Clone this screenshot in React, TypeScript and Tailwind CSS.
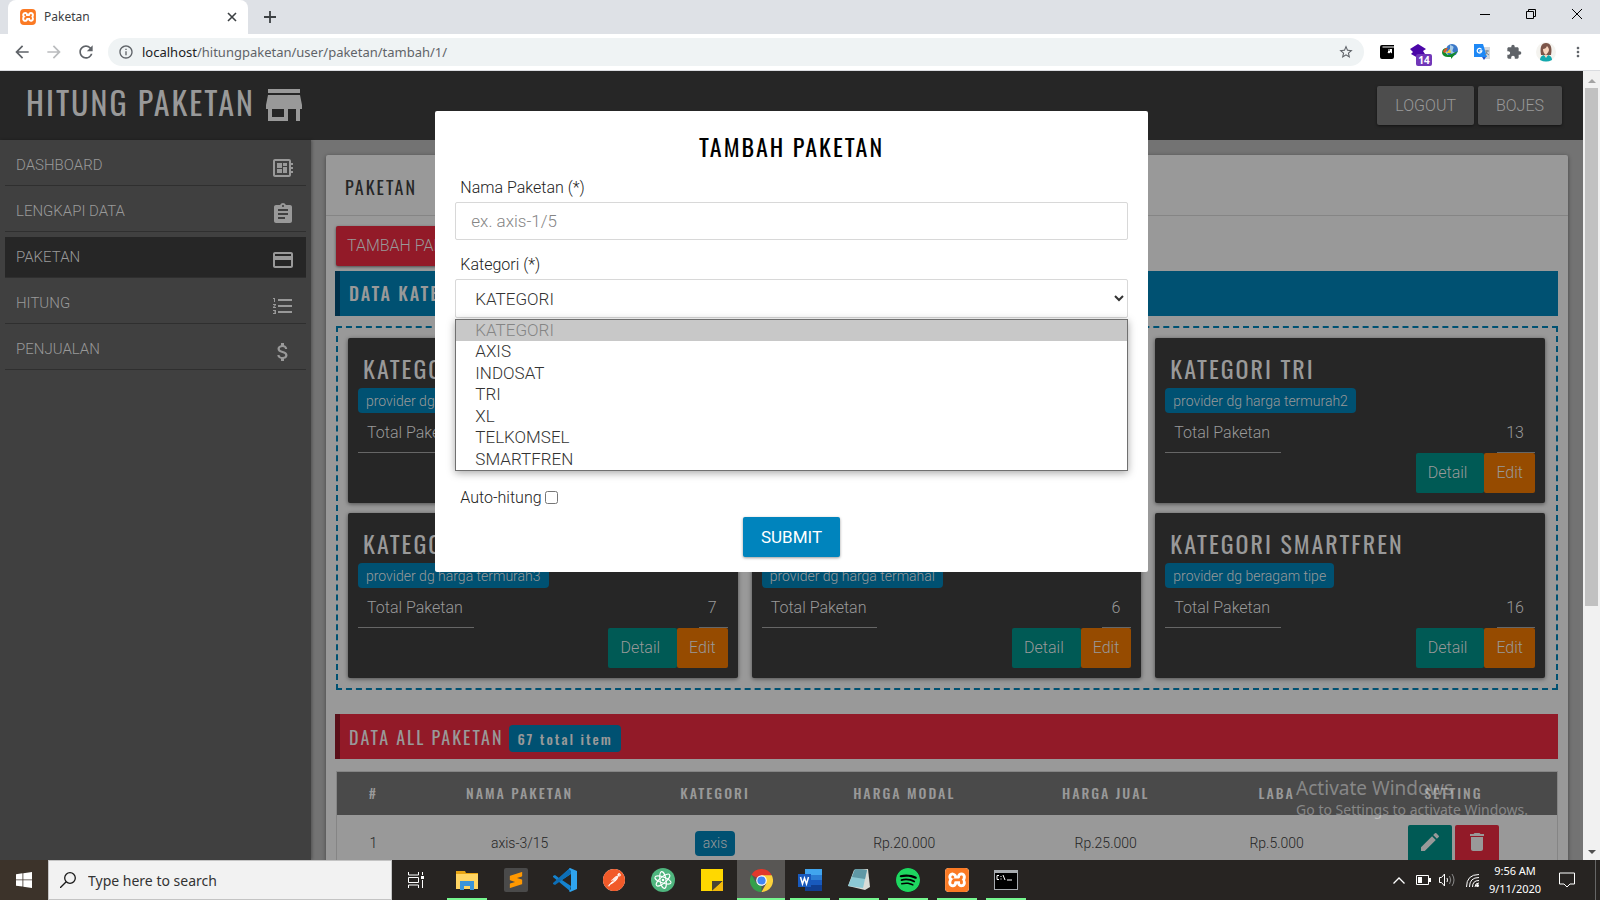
import { useState } from "react";
import type { ReactNode } from "react";
import clsx from "clsx";
import {
  MdArrowBack,
  MdArrowForward,
  MdAssignment,
  MdAttachMoney,
  MdDelete,
  MdDeveloperBoard,
  MdEdit,
  MdExtension,
  MdFormatListNumbered,
  MdInfoOutline,
  MdMoreVert,
  MdPayment,
  MdRefresh,
  MdStarBorder,
  MdStore,
} from "react-icons/md";
import { SiPostman, SiSpotify, SiSublimetext, SiXampp } from "react-icons/si";

const heading = "font-['Oswald',sans-serif] tracking-[2px]";
const system = "font-['Noto_Sans','Open_Sans',sans-serif]";

function XamppIcon({ className }: { className?: string }) {
  return (
    <span className={clsx("flex overflow-hidden rounded-sm bg-white text-[#fb7a24]", className)}>
      <SiXampp className="h-full w-full" />
    </span>
  );
}

function BrowserBar() {
  return (
    <div className={clsx("shrink-0 text-[#3c4043]", system)}>
      <div className="flex h-[34px] items-stretch bg-[#dee1e6] pl-2">
        <div className="flex w-60 items-center rounded-t-lg bg-white pr-[9px] pl-3 text-xs">
          <XamppIcon className="size-4" />
          <span className="ml-2 flex-1">Paketan</span>
          <button type="button" aria-label="Close tab" className="flex size-3.5 items-center justify-center">
            <svg viewBox="0 0 10 10" className="size-2.5" stroke="currentColor" strokeWidth="1.600">
              <path d="M1 1l8 8M9 1l-8 8" />
            </svg>
          </button>
        </div>
        <button type="button" aria-label="New tab" className="ml-4 flex items-center">
          <svg viewBox="0 0 12 12" className="size-3" stroke="currentColor" strokeWidth="1.800">
            <path d="M6 0v12M0 6h12" />
          </svg>
        </button>
        <div className="ml-auto flex pb-1.5 text-black">
          <button type="button" aria-label="Minimize" className="flex w-[46px] items-center justify-center">
            <svg viewBox="0 0 10 10" className="size-2.5" stroke="currentColor">
              <path d="M0 5.500h10" />
            </svg>
          </button>
          <button type="button" aria-label="Restore" className="flex w-[46px] items-center justify-center">
            <svg viewBox="0 0 10 10" className="size-2.5" fill="none" stroke="currentColor">
              <path d="M.5 2.500h7v7h-7zM2.500 2.500v-2h7v7h-2" />
            </svg>
          </button>
          <button type="button" aria-label="Close" className="flex w-[46px] items-center justify-center">
            <svg viewBox="0 0 10 10" className="size-2.5" stroke="currentColor">
              <path d="M0 0l10 10M10 0L0 10" />
            </svg>
          </button>
        </div>
      </div>
      <div className="flex h-[37px] items-center border-b border-[#dadce0] bg-white pr-3.5 pl-3 text-[#5f6368]">
        <div className="flex gap-3">
          <button type="button" aria-label="Back"><MdArrowBack className="size-5" /></button>
          <button type="button" aria-label="Forward" className="text-[#babcbe]"><MdArrowForward className="size-5" /></button>
          <button type="button" aria-label="Reload"><MdRefresh className="size-5" /></button>
        </div>
        <div className="mr-4 ml-3 flex h-7 flex-1 items-center rounded-full bg-[#eff3f4] px-2.5">
          <MdInfoOutline className="size-4" />
          <label className="ml-2 flex flex-1 items-center pt-0.5 text-[13px]">
            <span className="text-[#202124]">localhost</span>
            <input aria-label="Address" type="text" defaultValue="/hitungpaketan/user/paketan/tambah/1/" className="min-w-0 flex-1 bg-transparent outline-none" />
          </label>
          <MdStarBorder className="size-4" />
        </div>
        <div className="flex items-center gap-4">
          <svg viewBox="0 0 14 16" className="h-4 w-3.5">
            <path d="M2 1h12v1.500H2.500v1H14V13a2 2 0 0 1-2 2H2a2 2 0 0 1-2-2V3a2 2 0 0 1 2-2z" />
            <path d="M6 5h6v4.500l-1.500-1.200L9 9.500 7.500 8.300 6 5z" fill="#fff" />
            <path d="M6 5h2v3H6zM8.500 5h1v2h-1z" />
          </svg>
          <span className="relative size-4">
            <svg viewBox="0 0 16 16" className="size-4" fill="#4b06a8">
              <path d="M8 0l8 5-3 2 2 3-7 4-7-4 2-2-3-3z" />
            </svg>
            <span className="absolute top-2.5 left-1.5 flex h-3 w-4 items-center justify-center rounded-xs bg-[#7137b8] text-[10px] font-bold text-white">14</span>
          </span>
          <svg viewBox="0 0 16 16" className="size-4">
            <circle cx="10" cy="6" r="6" fill="#3a78c8" />
            <path d="M8 1q5 1 3 4t3 4q-4 3-6-1z" fill="#a6cbe8" />
            <path d="M0 9q0-5 5-5L3 8l3 3q4-1 10-4l-7 8V13H6Q1 13 0 9z" fill="#148a2c" />
            <path d="M1 8q1-4 5-4L3 9z" fill="#e0552b" />
            <path d="M4 9l4-4 1 4z" fill="#f3c535" />
          </svg>
          <svg viewBox="0 0 16 16" className="size-4">
            <path d="M7 3h9v12H10z" fill="#d5d8dc" />
            <path d="M0 0h9l4 13H0z" fill="#1e88f5" />
            <path d="M7.500 5.500A2.300 2.300 0 1 0 7.800 7H5.500" fill="none" stroke="#fff" strokeWidth="1.300" />
            <path d="M11 7h4M13 6v1q0 3-2 4M12 8q1 2 3 3" stroke="#7b8790" fill="none" />
            <path d="M8 13h4l-2 3z" fill="#2557c7" />
          </svg>
          <MdExtension className="size-4" />
          <svg viewBox="0 0 20 20" className="-mx-0.5 size-5">
            <circle cx="10" cy="10" r="10" fill="#f4f3ef" />
            <path d="M5 13Q3 1 10 1t5 12z" fill="#7c5549" />
            <path d="M7 7q3 0 4-3 2 2 2 4t-3 5q-3-2-3-6z" fill="#f7d4bd" />
            <path d="M4 18q0-4 4-5l2 2 2-2q4 1 4 5-6 3-12 0z" fill="#12a9ae" />
            <path d="M8 13h4l-2 3z" fill="#f7d4bd" />
          </svg>
          <MdMoreVert className="size-4" />
        </div>
      </div>
    </div>
  );
}

const menu = [
  { label: "DASHBOARD", Icon: MdDeveloperBoard },
  { label: "LENGKAPI DATA", Icon: MdAssignment },
  { label: "PAKETAN", Icon: MdPayment, active: true },
  { label: "HITUNG", Icon: MdFormatListNumbered },
  { label: "PENJUALAN", Icon: MdAttachMoney },
];

function Sidebar() {
  return (
    <nav className="w-[311px] shrink-0 bg-[#404040] p-[5px] shadow-[1px_0_3px_rgba(0,0,0,0.3)]">
      <ul className="flex flex-col gap-[5px]">
        {menu.map(({ label, Icon, active }) => (
          <li key={label}>
            <a
              href="#"
              className={clsx("flex h-[41px] items-center justify-between border-b border-[#2f2f2f] px-[11px] text-[15px]", active && "bg-[#262626]")}
            >
              {label}
              <Icon className="mt-1.5 size-6" />
            </a>
          </li>
        ))}
      </ul>
    </nav>
  );
}

const categories = [
  { name: "AXIS", note: "provider dg harga termurah", total: 15 },
  { name: "INDOSAT", note: "provider dg harga menengah", total: 10 },
  { name: "TRI", note: "provider dg harga termurah2", total: 13 },
  { name: "XL", note: "provider dg harga termurah3", total: 7 },
  { name: "TELKOMSEL", note: "provider dg harga termahal", total: 6 },
  { name: "SMARTFREN", note: "provider dg beragam tipe", total: 16 },
];

function Badge({ children, className }: { children: ReactNode; className?: string }) {
  return <span className={clsx("items-center rounded bg-[#005172] px-2 text-sm", className)}>{children}</span>;
}

function CategoryCard({ name, note, total }: { name: string; note: string; total: number }) {
  return (
    <article className="h-[165px] rounded-xs bg-[#262626] px-2.5 pt-2.5 shadow-[0_1px_4px_rgba(0,0,0,0.5)]">
      <h3 className={clsx("h-10 px-[5px] text-2xl leading-10 font-normal whitespace-nowrap", heading)}>KATEGORI {name}</h3>
      <Badge className="flex h-[25px] w-fit">{note}</Badge>
      <div className="flex h-10 justify-between leading-10">
        <span className="border-b border-[#666] pr-[11px] pl-[9px]">Total Paketan</span>
        <span className="border-b border-[#666] pr-[11px] pl-[9px]">{total}</span>
      </div>
      <div className="flex h-10 justify-end">
        <button type="button" className="rounded-xs bg-[#005a55] pr-[17px] pl-3">Detail</button>
        <button type="button" className="rounded-xs bg-[#964b00] px-3">Edit</button>
      </div>
    </article>
  );
}

const columns = [
  { label: "#", width: "w-[6%]" },
  { label: "NAMA PAKETAN", width: "w-[18%]" },
  { label: "KATEGORI", width: "w-[14%]" },
  { label: "HARGA MODAL", width: "w-[17%]" },
  { label: "HARGA JUAL", width: "w-[16%]" },
  { label: "LABA", width: "w-[12%]" },
  { label: "SETTING", width: "w-[17%]" },
];

function PackageTable() {
  return (
    <table className="w-full table-fixed border border-[#858585] text-center text-sm text-[#262626]">
      <thead className="bg-[#4a4a4a] text-[#999]">
        <tr className="h-[43px]">
          {columns.map((c) => (
            <th key={c.label} className={clsx("font-medium", c.width, heading)}>{c.label}</th>
          ))}
        </tr>
      </thead>
      <tbody>
        <tr className="h-[58px]">
          <td>1</td>
          <td>axis-3/15</td>
          <td><Badge className="inline-flex h-[25px] text-[#999]">axis</Badge></td>
          <td>Rp.20.000</td>
          <td>Rp.25.000</td>
          <td>Rp.5.000</td>
          <td>
            <div className="flex justify-center gap-[3px] pt-1 text-[#999]">
              <button type="button" aria-label="Edit axis-3/15" className="flex h-10 w-11 items-start justify-center rounded-xs bg-[#005a55] pt-[5px]"><MdEdit className="size-6" /></button>
              <button type="button" aria-label="Hapus axis-3/15" className="flex h-10 w-11 items-start justify-center rounded-xs bg-[#921a28] pt-[5px]"><MdDelete className="size-6" /></button>
            </div>
          </td>
        </tr>
      </tbody>
    </table>
  );
}

const options = ["KATEGORI", "AXIS", "INDOSAT", "TRI", "XL", "TELKOMSEL", "SMARTFREN"];

function PackageDialog() {
  const [name, setName] = useState("");
  return (
    <div className="absolute inset-0 flex items-start justify-center pt-10">
      <form role="dialog" aria-labelledby="dialog-title" className="h-[461px] w-[45%] rounded-xs bg-white px-5 text-[#222]">
        <h2 id="dialog-title" className={clsx("pt-[15px] text-center text-2xl leading-10 font-normal text-black", heading)}>TAMBAH PAKETAN</h2>
        <label htmlFor="nama" className="mt-2.5 block px-[5px] leading-6">Nama Paketan (*)</label>
        <input
          id="nama"
          type="text"
          value={name}
          onChange={(e) => setName(e.target.value)}
          placeholder="ex. axis-1/5"
          className="mt-0.5 block h-[38px] w-full rounded-xs border border-[#d8d8d8] px-[15px] text-[17px] placeholder:text-[#858585]"
        />
        <label htmlFor="kategori" className="mt-[13px] block px-[5px] leading-6">Kategori (*)</label>
        <div className="relative mt-0.5 text-[17px] leading-[21px] text-[#333]">
          <select id="kategori" className="block h-[39px] w-full rounded-xs border border-[#d8d8d8] bg-white pl-[15px]">
            {options.map((o) => <option key={o}>{o}</option>)}
          </select>
          <ul className="absolute top-10 left-0 flex h-[152px] w-full flex-col border border-[#707070] bg-white shadow-[0_2px_8px_rgba(0,0,0,0.35)]">
            {options.map((o, i) => (
              <li key={o} className={clsx("flex-1 pl-[19px]", i === 0 && "bg-[#c8c8c8] text-[#858585]")}>{o}</li>
            ))}
          </ul>
        </div>
        <label className="mt-[168px] flex items-center gap-[3px] px-[5px] leading-6">
          Auto-hitung
          <input type="checkbox" className="mb-0.5 size-[13px]" />
        </label>
        <button type="button" className="mx-auto mt-[7px] block h-10 rounded-xs bg-[#0084bd] px-[18px] pt-px text-[17px] font-normal text-white shadow-[0_1px_3px_rgba(0,0,0,0.4)]">SUBMIT</button>
      </form>
    </div>
  );
}

function Page() {
  return (
    <div className="relative flex min-w-0 flex-1 flex-col overflow-hidden bg-[#737373] font-light text-[#999]">
      <header className="flex h-[69px] shrink-0 items-center bg-[#262626] pr-[21px] pl-[26px]">
        <h1 className={clsx("pb-2 text-[32px] leading-none font-normal", heading)}>HITUNG PAKETAN</h1>
        <MdStore className="ml-1 size-[50px] pb-0.5" />
        <div className="ml-auto flex gap-1">
          <button type="button" className="h-[39px] rounded-xs bg-[#4d4d4d] px-[18px] shadow-[0_1px_3px_rgba(0,0,0,0.5)]">LOGOUT</button>
          <button type="button" className="h-[39px] rounded-xs bg-[#4d4d4d] px-[18px] shadow-[0_1px_3px_rgba(0,0,0,0.5)]">BOJES</button>
        </div>
      </header>
      <div className="flex min-h-0 flex-1">
        <Sidebar />
        <main className="min-w-0 flex-1 p-[15px]">
          <section className="rounded-xs bg-[#999] shadow-[0_1px_4px_rgba(0,0,0,0.4)]">
            <h2 className={clsx("h-[61px] border-b border-[#858585] pl-[19px] text-lg leading-[64px] font-normal text-[#262626]", heading)}>PAKETAN</h2>
            <div className="pt-2.5 pr-2.5 pb-4 pl-[9px]">
              <button type="button" className="ml-px block h-10 rounded-xs bg-[#921a28] px-[11px] shadow-[0_1px_3px_rgba(0,0,0,0.5)]">TAMBAH PAKETAN</button>
              <h3 className={clsx("mt-[5px] h-[45px] border-l-[5px] border-[#003049] bg-[#005172] pl-[9px] text-lg leading-[45px] font-medium", heading)}>DATA KATEGORI</h3>
              <div className="mt-2.5 ml-px grid grid-cols-3 gap-x-3.5 gap-y-2.5 border-2 border-dashed border-[#005172] py-2.5 pr-[11px] pl-2.5">
                {categories.map((c) => <CategoryCard key={c.name} {...c} />)}
              </div>
              <h3 className={clsx("mt-6 flex h-[45px] items-center border-l-[5px] border-[#5a0f19] bg-[#921a28] pl-[9px] text-lg font-normal", heading)}>
                DATA ALL PAKETAN
                <Badge className="mt-1 ml-1.5 flex h-[27px] font-medium">67 total item</Badge>
              </h3>
              <div className="mt-3 pl-px">
                <PackageTable />
              </div>
            </div>
          </section>
        </main>
      </div>
      <PackageDialog />
    </div>
  );
}

function Scrollbar() {
  return (
    <div className="flex w-[17px] shrink-0 flex-col items-center bg-[#f1f1f1] py-1.5">
      <svg viewBox="0 0 8 4" className="mt-0.5 h-1 w-2" fill="#a3a3a3"><path d="M4 0l4 4H0z" /></svg>
      <div className="mt-[5px] h-2/3 w-[13px] bg-[#c1c1c1]" />
      <svg viewBox="0 0 8 4" className="mt-auto h-1 w-2" fill="#505050"><path d="M4 4l4-4H0z" /></svg>
    </div>
  );
}

const apps: { name: string; open?: boolean; current?: boolean; icon: ReactNode }[] = [
  {
    name: "File Explorer",
    open: true,
    icon: (
      <svg viewBox="0 0 24 24" className="size-6">
        <path d="M1 3h9l1 2h12v16H1z" fill="#e8a514" />
        <path d="M1 6h22v15H1z" fill="#ffd563" />
        <path d="M5 13h14v9h-4v-4H9v4H5z" fill="#3a94d9" />
      </svg>
    ),
  },
  {
    name: "Sublime Text",
    icon: <span className="flex size-6 items-center justify-center rounded-xs bg-[#4a4a4a]"><SiSublimetext className="size-4 text-[#ff9800]" /></span>,
  },
  {
    name: "Visual Studio Code",
    icon: (
      <svg viewBox="0 0 24 24" className="size-6">
        <path d="M17 0L6 10 2 7 0 8v1l17 14 1-5-9-6 9-6z" fill="#1583cf" />
        <path d="M0 15v1l2 1L18 5.500 17 0 0 15z" fill="#0d6fb8" />
        <path d="M17 0l7 3v18l-7 3-1-1 2-2V3l-2-2z" fill="#2fa4ef" />
      </svg>
    ),
  },
  {
    name: "Postman",
    icon: (
      <span className="flex size-[22px] rounded-full bg-white">
        <SiPostman className="size-[22px] text-[#f15a29]" />
      </span>
    ),
  },
  {
    name: "Atom",
    icon: (
      <svg viewBox="0 0 24 24" className="size-6">
        <circle cx="12" cy="12" r="12" fill="#4fb57e" />
        <g fill="none" stroke="#fff" strokeWidth="1.100">
          <ellipse cx="12" cy="12" rx="3" ry="8.500" transform="rotate(-10 12 12)" />
          <ellipse cx="12" cy="12" rx="3" ry="8.500" transform="rotate(50 12 12)" />
          <ellipse cx="12" cy="12" rx="3" ry="8.500" transform="rotate(110 12 12)" />
        </g>
        <circle cx="12" cy="12" r="1.300" fill="#fff" />
      </svg>
    ),
  },
  {
    name: "Sticky Notes",
    icon: (
      <svg viewBox="0 0 22 22" className="size-[22px]">
        <path d="M0 0h22v22H0z" fill="#ffd800" />
        <path d="M11 22V12h11z" fill="#4a4434" />
        <path d="M11 22l11-10v10z" fill="#f2b90c" />
      </svg>
    ),
  },
  {
    name: "Google Chrome",
    open: true,
    current: true,
    icon: (
      <svg viewBox="0 0 24 24" className="size-[23px]">
        <path d="M12 12L1.600 6A12 12 0 0 1 22.400 6z" fill="#e2382b" />
        <path d="M12 12V24A12 12 0 0 1 1.600 6l5.200 9z" fill="#34a04b" />
        <path d="M12 6.500h10.700A12 12 0 0 1 12 24l5-9z" fill="#fcd23c" />
        <circle cx="12" cy="12" r="5.500" fill="#fff" />
        <circle cx="12" cy="12" r="4.300" fill="#4285f4" />
      </svg>
    ),
  },
  {
    name: "Word",
    open: true,
    icon: (
      <svg viewBox="0 0 24 24" className="size-6">
        <path d="M7 1h17v6H7z" fill="#41a5ee" />
        <path d="M7 7h17v5H7z" fill="#2b7cd3" />
        <path d="M7 12h17v5H7z" fill="#185abd" />
        <path d="M7 17h17v6H7z" fill="#103f91" />
        <path d="M0 6h13v13H0z" fill="#185abd" />
        <path d="M2.500 9l2 7 2-6 2 6 2-7" fill="none" stroke="#fff" strokeWidth="1.500" />
      </svg>
    ),
  },
  {
    name: "Notepad",
    open: true,
    icon: (
      <svg viewBox="0 0 24 24" className="size-6">
        <path d="M7 2l14-1 2 18-5 3L1 18z" fill="#d9dcd6" />
        <path d="M8 1l12 1-4 18-15-2z" fill="#8cc9d4" />
        <path d="M8 1l12 1-2 9-13-2z" fill="#5f98a5" />
      </svg>
    ),
  },
  {
    name: "Spotify",
    open: true,
    icon: <span className="flex size-6 rounded-full bg-black"><SiSpotify className="size-6 text-[#1ed760]" /></span>,
  },
  { name: "XAMPP", open: true, icon: <XamppIcon className="size-6" /> },
  {
    name: "Command Prompt",
    open: true,
    icon: (
      <svg viewBox="0 0 24 20" className="h-5 w-6">
        <path d="M0 0h24v20H0z" fill="#a8acb0" />
        <path d="M1 3h22v16H1z" fill="#000" />
        <path d="M5 5.500H3v4h2M7 6v1M7 8.500v1M9 5l2 5M13 10h5" stroke="#fff" fill="none" />
      </svg>
    ),
  },
];

function Taskbar() {
  return (
    <footer className={clsx("flex h-10 shrink-0 items-stretch bg-[#272422] text-white", system)}>
      <button type="button" aria-label="Start" className="flex w-12 items-center justify-center bg-[#3c332a]">
        <svg viewBox="0 0 16 16" className="size-4" fill="#fff">
          <path d="M0 2.200l6.500-.9v6.200H0zM7.300 1.200L16 0v7.500H7.300zM0 8.300h6.500v6.300L0 13.700zM7.300 8.300H16V16l-8.700-1.200z" />
        </svg>
      </button>
      <label className="flex w-[344px] items-center border border-[#c4c4c4] bg-[#f2f2f2] pl-[11px]">
        <svg viewBox="0 0 16 16" className="size-4" fill="none" stroke="#1a1a1a" strokeWidth="1.300">
          <circle cx="10" cy="6" r="5.300" />
          <path d="M6.200 9.800L0 16" />
        </svg>
        <input type="text" aria-label="Search" placeholder="Type here to search" className="ml-3 min-w-0 flex-1 bg-transparent pt-0.5 text-sm text-black outline-none placeholder:text-[#333]" />
      </label>
      <button type="button" aria-label="Task View" className="flex w-12 items-center justify-center">
        <svg viewBox="0 0 16 16" className="size-4" fill="none" stroke="#fff">
          <path d="M.5 0v3M10.500 0v3M.5 3h10M.5 5.500h10v5H.5zM.5 16v-3M10.500 16v-3M.5 13h10M14.500 0v3M14.500 8v8" />
          <path d="M13 4h3v3h-3z" fill="#fff" stroke="none" />
        </svg>
      </button>
      <div className="ml-[3px] flex gap-px">
        {apps.map((app) => (
          <button
            key={app.name}
            type="button"
            aria-label={app.name}
            className={clsx("relative flex w-12 items-center justify-center", app.current && "bg-[#585654]")}
          >
            {app.icon}
            {app.open && <span className={clsx("absolute bottom-0 h-0.5 bg-[#76f78f]", app.current ? "inset-x-0" : "inset-x-1")} />}
          </button>
        ))}
      </div>
      <div className="ml-auto flex items-center">
        <svg viewBox="0 0 12 7" className="h-[7px] w-3" fill="none" stroke="#fff" strokeWidth="1.300"><path d="M.5 6.500L6 1l5.500 5.500" /></svg>
        <svg viewBox="0 0 15 10" className="ml-[11px] h-2.5 w-[15px]" fill="none" stroke="#fff">
          <path d="M.5.5h12v9H.5z" />
          <path d="M2 2h4v6H2zM13 3h2v4h-2z" fill="#fff" stroke="none" />
        </svg>
        <svg viewBox="0 0 16 14" className="ml-2 h-3.5 w-4" fill="none" stroke="#fff">
          <path d="M.5 4.500h2l3-3.500v12l-3-3.500h-2zM8 5q1 2 0 4" />
          <path d="M10.500 3q2.500 4 0 8M13 1q4 6 0 12" stroke="#8a8a8a" />
        </svg>
        <svg viewBox="0 0 13 13" className="ml-[11px] size-[13px]" fill="none" stroke="#fff">
          <path d="M.5 13Q.5.500 13 .5M3.500 13Q3.500 3.500 13 3.500M6.500 13Q6.500 6.500 13 6.500M9 13Q9 9 13 9" />
          <circle cx="11.500" cy="11.500" r="1.500" fill="#fff" stroke="none" />
        </svg>
        <div className="ml-2 w-14 text-center text-[11px] leading-[18px] whitespace-nowrap">
          <div>9:56 AM</div>
          <div>9/11/2020</div>
        </div>
        <svg viewBox="0 0 16 16" className="ml-4 size-4" fill="none" stroke="#fff"><path d="M.5 1h15v11H11l-3 3-3-3H.5z" /></svg>
        <span className="mr-1 ml-5 h-10 w-px bg-[#666]" />
      </div>
    </footer>
  );
}

export default function App() {
  return (
    <div className="relative flex h-screen flex-col overflow-hidden font-['Roboto',sans-serif] text-base">
      <BrowserBar />
      <div className="flex min-h-0 flex-1">
        <Page />
        <Scrollbar />
      </div>
      <Taskbar />
      <div className={clsx("pointer-events-none absolute right-[72px] bottom-20 text-white/35", system)}>
        <p className="text-[19px] leading-6">Activate Windows</p>
        <p className="text-sm leading-5">Go to Settings to activate Windows.</p>
      </div>
    </div>
  );
}
